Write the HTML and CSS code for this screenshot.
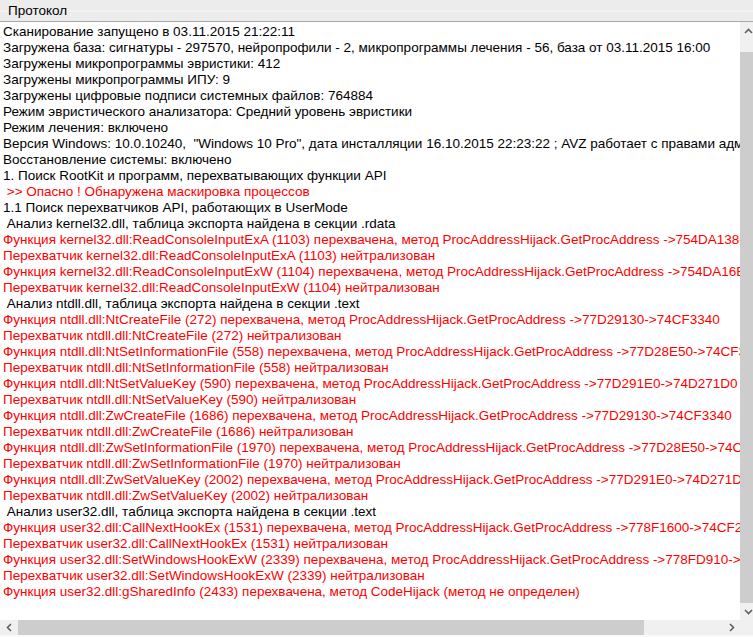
FILE: index.html
```html
<!DOCTYPE html>
<html lang="ru">
<head>
  <meta charset="UTF-8">
  <title>Протокол</title>
  <link rel="stylesheet" href="styles.css">
</head>
<body>
  <div class="protocol">
    <!-- Header -->
    <div class="protocol-header">
      <span class="protocol-title">Протокол</span>
    </div>

    <!-- Log + vertical scrollbar -->
    <div class="protocol-body">
      <div class="log">
        <div class="line">Сканирование запущено в 03.11.2015 21:22:11</div>
        <div class="line">Загружена база: сигнатуры - 297570, нейропрофили - 2, микропрограммы лечения - 56, база от 03.11.2015 16:00</div>
        <div class="line">Загружены микропрограммы эвристики: 412</div>
        <div class="line">Загружены микропрограммы ИПУ: 9</div>
        <div class="line">Загружены цифровые подписи системных файлов: 764884</div>
        <div class="line">Режим эвристического анализатора: Средний уровень эвристики</div>
        <div class="line">Режим лечения: включено</div>
        <div class="line">Версия Windows: 10.0.10240,  "Windows 10 Pro", дата инсталляции 16.10.2015 22:23:22 ; AVZ работает с правами администратора</div>
        <div class="line">Восстановление системы: включено</div>
        <div class="line">1. Поиск RootKit и программ, перехватывающих функции API</div>
        <div class="line red"> &gt;&gt; Опасно ! Обнаружена маскировка процессов</div>
        <div class="line">1.1 Поиск перехватчиков API, работающих в UserMode</div>
        <div class="line"> Анализ kernel32.dll, таблица экспорта найдена в секции .rdata</div>
        <div class="line red">Функция kernel32.dll:ReadConsoleInputExA (1103) перехвачена, метод ProcAddressHijack.GetProcAddress -&gt;754DA138-&gt;74CF2DB0</div>
        <div class="line red">Перехватчик kernel32.dll:ReadConsoleInputExA (1103) нейтрализован</div>
        <div class="line red">Функция kernel32.dll:ReadConsoleInputExW (1104) перехвачена, метод ProcAddressHijack.GetProcAddress -&gt;754DA16B-&gt;74CF2E20</div>
        <div class="line red">Перехватчик kernel32.dll:ReadConsoleInputExW (1104) нейтрализован</div>
        <div class="line"> Анализ ntdll.dll, таблица экспорта найдена в секции .text</div>
        <div class="line red">Функция ntdll.dll:NtCreateFile (272) перехвачена, метод ProcAddressHijack.GetProcAddress -&gt;77D29130-&gt;74CF3340</div>
        <div class="line red">Перехватчик ntdll.dll:NtCreateFile (272) нейтрализован</div>
        <div class="line red">Функция ntdll.dll:NtSetInformationFile (558) перехвачена, метод ProcAddressHijack.GetProcAddress -&gt;77D28E50-&gt;74CF3410</div>
        <div class="line red">Перехватчик ntdll.dll:NtSetInformationFile (558) нейтрализован</div>
        <div class="line red">Функция ntdll.dll:NtSetValueKey (590) перехвачена, метод ProcAddressHijack.GetProcAddress -&gt;77D291E0-&gt;74D271D0</div>
        <div class="line red">Перехватчик ntdll.dll:NtSetValueKey (590) нейтрализован</div>
        <div class="line red">Функция ntdll.dll:ZwCreateFile (1686) перехвачена, метод ProcAddressHijack.GetProcAddress -&gt;77D29130-&gt;74CF3340</div>
        <div class="line red">Перехватчик ntdll.dll:ZwCreateFile (1686) нейтрализован</div>
        <div class="line red">Функция ntdll.dll:ZwSetInformationFile (1970) перехвачена, метод ProcAddressHijack.GetProcAddress -&gt;77D28E50-&gt;74CF3410</div>
        <div class="line red">Перехватчик ntdll.dll:ZwSetInformationFile (1970) нейтрализован</div>
        <div class="line red">Функция ntdll.dll:ZwSetValueKey (2002) перехвачена, метод ProcAddressHijack.GetProcAddress -&gt;77D291E0-&gt;74D271D0</div>
        <div class="line red">Перехватчик ntdll.dll:ZwSetValueKey (2002) нейтрализован</div>
        <div class="line"> Анализ user32.dll, таблица экспорта найдена в секции .text</div>
        <div class="line red">Функция user32.dll:CallNextHookEx (1531) перехвачена, метод ProcAddressHijack.GetProcAddress -&gt;778F1600-&gt;74CF2710</div>
        <div class="line red">Перехватчик user32.dll:CallNextHookEx (1531) нейтрализован</div>
        <div class="line red">Функция user32.dll:SetWindowsHookExW (2339) перехвачена, метод ProcAddressHijack.GetProcAddress -&gt;778FD910-&gt;74CF2A60</div>
        <div class="line red">Перехватчик user32.dll:SetWindowsHookExW (2339) нейтрализован</div>
        <div class="line red">Функция user32.dll:gSharedInfo (2433) перехвачена, метод CodeHijack (метод не определен)</div>
      </div>

      <div class="vscroll">
        <div class="sb-button">
          <svg width="9" height="6" viewBox="0 0 9 6"><polyline points="1,5 4.5,1.5 8,5" fill="none" stroke="#606060" stroke-width="1.6"/></svg>
        </div>
        <div class="sb-track vtrack-top"></div>
        <div class="sb-thumb"></div>
        <div class="sb-button">
          <svg width="9" height="6" viewBox="0 0 9 6"><polyline points="1,1 4.5,4.5 8,1" fill="none" stroke="#606060" stroke-width="1.6"/></svg>
        </div>
      </div>
    </div>

    <!-- Horizontal scrollbar -->
    <div class="hscroll">
      <div class="sb-button">
        <svg width="6" height="9" viewBox="0 0 6 9"><polyline points="5,1 1.5,4.5 5,8" fill="none" stroke="#606060" stroke-width="1.6"/></svg>
      </div>
      <div class="sb-thumb hthumb"></div>
      <div class="sb-track htrack"></div>
      <div class="sb-button">
        <svg width="6" height="9" viewBox="0 0 6 9"><polyline points="1,1 4.5,4.5 1,8" fill="none" stroke="#606060" stroke-width="1.6"/></svg>
      </div>
      <div class="sb-corner"></div>
    </div>
  </div>
</body>
</html>
```

FILE: styles.css
```css
/* Base */
* {
  box-sizing: border-box;
  margin: 0;
  padding: 0;
}

html, body {
  height: 100%;
  overflow: hidden;
  background: #ffffff;
  font-family: 'Liberation Sans', Arial, sans-serif;
  font-size: 13.5px;
  color: #000;
}

/* Outer frame - a little wider than the window, the right scrollbar is clipped */
.protocol {
  width: 757px;
  height: 637px;
  display: flex;
  flex-direction: column;
}

/* Header strip */
.protocol-header {
  height: 22px;
  flex-shrink: 0;
  padding-left: 8px;
  display: flex;
  align-items: center;
  background: linear-gradient(to bottom, #ececec 0, #ececec 10px, #f6f6f6 11px, #ececec 12px, #ececec 100%);
  border-bottom: 1px solid #a8a8a8;
  color: #000;
  line-height: 16px;
}

.protocol-title {
  padding-top: 1px;
}

/* Log area */
.protocol-body {
  flex: 1;
  display: flex;
  min-height: 0;
}

.log {
  width: 740px;
  overflow: hidden;
  padding: 2px 0 0 3px;
  background: #fff;
}

.line {
  white-space: pre;
  line-height: 16px;
  height: 16px;
}

.red {
  color: #ff0000;
}

/* Scrollbars */
.vscroll {
  width: 17px;
  display: flex;
  flex-direction: column;
  background: #f0f0f0;
}

.sb-button {
  width: 17px;
  height: 17px;
  flex-shrink: 0;
  display: flex;
  align-items: center;
  justify-content: center;
  background: #f0f0f0;
}

.sb-track {
  background: #f0f0f0;
}

.vtrack-top {
  height: 13px;
}

.sb-thumb {
  flex: 1;
  background: #cdcdcd;
}

.hscroll {
  height: 17px;
  flex-shrink: 0;
  display: flex;
  background: #f0f0f0;
  border-bottom: 2px solid #fafafa;
}

.hscroll .sb-button {
  height: 15px;
}

.hthumb {
  flex: none;
  width: 626px;
  margin-left: 1px;
}

.htrack {
  flex: 1;
}

.sb-corner {
  width: 17px;
  background: #f0f0f0;
}
```
